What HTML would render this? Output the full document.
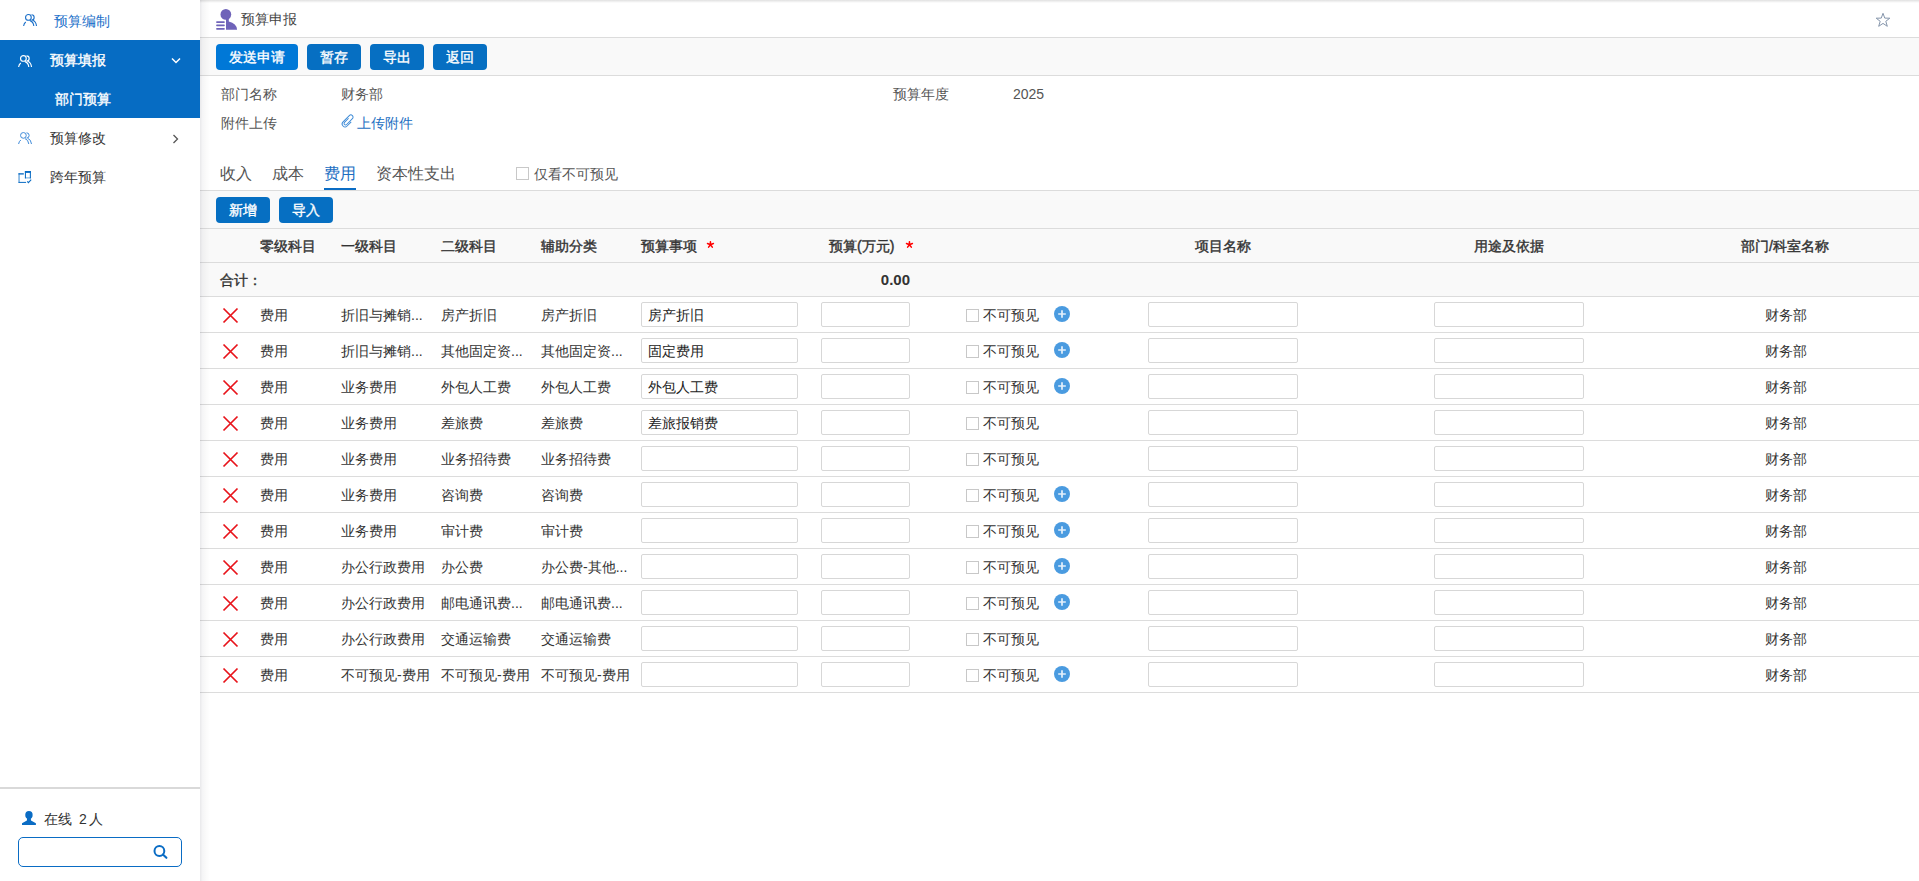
<!DOCTYPE html>
<html><head><meta charset="utf-8"><style>
html,body{margin:0;padding:0;}
body{width:1919px;height:881px;overflow:hidden;position:relative;background:#fff;font-family:"Liberation Sans", sans-serif;}
.t{position:absolute;white-space:nowrap;line-height:20px;}
.m{font-weight:500}
.btn{position:absolute;color:#fff;font-size:14px;text-align:center;border-radius:4px;-webkit-text-stroke:0.35px #fff;}
</style></head><body>
<div style="position:absolute;left:0px;top:40px;width:200px;height:78px;background:#066cc3"></div>
<svg style="position:absolute;left:23px;top:12.5px" width="15" height="15" viewBox="0 0 15 15">
<circle cx="5.4" cy="4.4" r="2.85" fill="none" stroke="#1a6fc9" stroke-width="1.1"/>
<path d="M8.5 1.8 A2.65 2.65 0 0 1 8.5 7.1" fill="none" stroke="#1a6fc9" stroke-width="1.1"/>
<path d="M0.6 13 Q1.0 10.3 2.8 9.0" fill="none" stroke="#1a6fc9" stroke-width="1.1"/>
<path d="M7.0 7.6 Q10.3 8.6 10.8 13" fill="none" stroke="#1a6fc9" stroke-width="1.1"/>
<path d="M9.7 7.3 Q13.0 8.4 13.5 13" fill="none" stroke="#1a6fc9" stroke-width="1.1"/>
</svg>
<div class="t" style="left:54px;top:10.5px;font-size:14px;color:#1a6fc9;font-weight:normal;">预算编制</div>
<svg style="position:absolute;left:18px;top:53.5px" width="15" height="15" viewBox="0 0 15 15">
<circle cx="5.4" cy="4.4" r="2.85" fill="none" stroke="#fff" stroke-width="1.15"/>
<path d="M8.5 1.8 A2.65 2.65 0 0 1 8.5 7.1" fill="none" stroke="#fff" stroke-width="1.15"/>
<path d="M0.6 13 Q1.0 10.3 2.8 9.0" fill="none" stroke="#fff" stroke-width="1.15"/>
<path d="M7.0 7.6 Q10.3 8.6 10.8 13" fill="none" stroke="#fff" stroke-width="1.15"/>
<path d="M9.7 7.3 Q13.0 8.4 13.5 13" fill="none" stroke="#fff" stroke-width="1.15"/>
</svg>
<div class="t" style="left:50px;top:49.5px;font-size:14px;color:#fff;font-weight:normal;-webkit-text-stroke:0.35px #fff;">预算填报</div>
<svg style="position:absolute;left:171px;top:57px" width="10" height="8" viewBox="0 0 10 8"><path d="M1 1.5 L5 5.5 L9 1.5" fill="none" stroke="#fff" stroke-width="1.5"/></svg>
<div class="t" style="left:55px;top:88.5px;font-size:14px;color:#fff;font-weight:normal;-webkit-text-stroke:0.35px #fff;">部门预算</div>
<svg style="position:absolute;left:18px;top:131px" width="15" height="15" viewBox="0 0 15 15">
<circle cx="5.4" cy="4.4" r="2.85" fill="none" stroke="#3f8bd9" stroke-width="1.0"/>
<path d="M8.5 1.8 A2.65 2.65 0 0 1 8.5 7.1" fill="none" stroke="#3f8bd9" stroke-width="1.0"/>
<path d="M0.6 13 Q1.0 10.3 2.8 9.0" fill="none" stroke="#3f8bd9" stroke-width="1.0"/>
<path d="M7.0 7.6 Q10.3 8.6 10.8 13" fill="none" stroke="#3f8bd9" stroke-width="1.0"/>
<path d="M9.7 7.3 Q13.0 8.4 13.5 13" fill="none" stroke="#3f8bd9" stroke-width="1.0"/>
</svg>
<div class="t" style="left:50px;top:127.5px;font-size:14px;color:#333;font-weight:normal;">预算修改</div>
<svg style="position:absolute;left:172px;top:134px" width="8" height="10" viewBox="0 0 8 10"><path d="M1.5 1 L5.5 5 L1.5 9" fill="none" stroke="#555" stroke-width="1.3"/></svg>
<svg style="position:absolute;left:14px;top:165px" width="22" height="24" viewBox="0 0 22 24" fill="#0a6cc4">
<rect x="4.5" y="8.2" width="5.3" height="1.35"/>
<rect x="4.5" y="8.2" width="1.1" height="9.6" opacity="0.75"/>
<rect x="4.5" y="16.9" width="7.6" height="1.0"/>
<rect x="10.9" y="6" width="6" height="1.9"/>
<rect x="10.9" y="6" width="1.05" height="7.4"/>
<rect x="15.85" y="6" width="1.05" height="7.4"/>
<rect x="10.9" y="12.4" width="6" height="1.0" opacity="0.6"/>
<path d="M13.3 16.3 L14.4 17.6 L17.2 14.7" fill="none" stroke="#0a6cc4" stroke-width="1.1"/>
</svg>
<div class="t" style="left:50px;top:167.0px;font-size:14px;color:#333;font-weight:normal;">跨年预算</div>
<div style="position:absolute;left:0px;top:787px;width:200px;height:2px;background:#d9d9d9"></div>
<svg style="position:absolute;left:16px;top:806px" width="26" height="24" viewBox="0 0 26 24">
<ellipse cx="12.95" cy="9.0" rx="3.7" ry="4.1" fill="#0a6cc4"/>
<path d="M11.1 12 L14.8 12 L15.0 14.4 L19.9 17.3 L19.9 19.1 L6.0 19.1 L6.0 17.3 L10.9 14.4 Z" fill="#0a6cc4"/>
</svg>
<div class="t" style="left:44px;top:809.0px;font-size:14px;color:#333;font-weight:normal;">在线</div>
<div class="t" style="left:79px;top:809.0px;font-size:14px;color:#333;font-weight:normal;">2</div>
<div class="t" style="left:89px;top:809.0px;font-size:14px;color:#333;font-weight:normal;">人</div>
<div style="position:absolute;left:18px;top:837px;width:164px;height:30px;box-sizing:border-box;border:1.5px solid #0a6cc4;border-radius:5px;background:#fff"></div>
<svg style="position:absolute;left:152px;top:844px" width="17" height="17" viewBox="0 0 17 17">
<circle cx="7.4" cy="7" r="4.9" fill="none" stroke="#0a6cc4" stroke-width="2"/>
<path d="M10.9 10.5 L14.4 13.8" stroke="#0a6cc4" stroke-width="2.1" stroke-linecap="round"/>
</svg>
<div style="position:absolute;left:200px;top:0px;width:1719px;height:881px;background:#fff"></div>
<div style="position:absolute;left:200px;top:38px;width:1719px;height:37px;background:#f9f9f9"></div>
<div style="position:absolute;left:200px;top:37px;width:1719px;height:1px;background:#dcdcdc"></div>
<div style="position:absolute;left:200px;top:75px;width:1719px;height:1px;background:#dcdcdc"></div>
<svg style="position:absolute;left:212px;top:4px" width="30" height="30" viewBox="0 0 30 30">
<circle cx="13.85" cy="10.4" r="5.35" fill="#6f63b9"/>
<path d="M14 13 L16.8 13 L16.8 17.6 Q24.6 19.4 25.1 25.8 L14 25.8 Z" fill="#6f63b9"/>
<rect x="4.1" y="17.2" width="8.7" height="1.75" rx="0.8" fill="#6f63b9"/>
<rect x="4.1" y="20.6" width="8.7" height="1.6" rx="0.8" fill="#6f63b9"/>
<rect x="4.1" y="24.0" width="8.7" height="1.75" rx="0.8" fill="#6f63b9"/>
</svg>
<div class="t" style="left:241px;top:8.5px;font-size:14px;color:#444;font-weight:normal;">预算申报</div>
<svg style="position:absolute;left:1875px;top:12px" width="16" height="16" viewBox="0 0 16 16">
<path d="M8 1.3 L9.75 6.1 L14.8 6.2 L10.8 9.3 L12.3 14.3 L8 11.4 L3.7 14.3 L5.2 9.3 L1.2 6.2 L6.25 6.1 Z" fill="none" stroke="#8595ab" stroke-width="1"/>
</svg>
<div class="btn" style="left:216px;top:44px;width:82px;height:26px;background:#0078d7;line-height:26px">发送申请</div>
<div class="btn" style="left:307px;top:44px;width:54px;height:26px;background:#066fc2;line-height:26px">暂存</div>
<div class="btn" style="left:370px;top:44px;width:54px;height:26px;background:#066fc2;line-height:26px">导出</div>
<div class="btn" style="left:433px;top:44px;width:54px;height:26px;background:#066fc2;line-height:26px">返回</div>
<div class="t" style="left:221px;top:83.5px;font-size:14px;color:#555;font-weight:normal;">部门名称</div>
<div class="t" style="left:341px;top:83.5px;font-size:14px;color:#555;font-weight:normal;">财务部</div>
<div class="t" style="left:893px;top:83.5px;font-size:14px;color:#555;font-weight:normal;">预算年度</div>
<div class="t" style="left:1013px;top:83.5px;font-size:14px;color:#555;font-weight:normal;">2025</div>
<div class="t" style="left:221px;top:112.5px;font-size:14px;color:#555;font-weight:normal;">附件上传</div>
<svg style="position:absolute;left:336px;top:108px" width="24" height="24" viewBox="0 0 24 24">
<g transform="translate(12.1 12.9) rotate(45)">
<path d="M2.9 -1.5 L2.9 4.3 A2.9 2.9 0 0 1 -2.9 4.3 L-2.9 -4.6 A2.2 2.2 0 0 1 1.5 -4.6 L1.5 3.6 A1.5 1.5 0 0 1 -1.5 3.6 L-1.5 -2.2" fill="none" stroke="#3d8ad6" stroke-width="0.95"/>
</g></svg>
<div class="t" style="left:357px;top:112.5px;font-size:14px;color:#1d6fc2;font-weight:normal;">上传附件</div>
<div class="t" style="left:220px;top:163.5px;font-size:16px;color:#555;font-weight:normal;">收入</div>
<div class="t" style="left:272px;top:163.5px;font-size:16px;color:#555;font-weight:normal;">成本</div>
<div class="t" style="left:324px;top:163.5px;font-size:16px;color:#1d6fc2;font-weight:normal;">费用</div>
<div class="t" style="left:376px;top:163.5px;font-size:16px;color:#555;font-weight:normal;">资本性支出</div>
<div style="position:absolute;left:324px;top:188px;width:32px;height:2px;background:#0a6cc4"></div>
<div style="position:absolute;left:516px;top:167px;width:13px;height:13px;box-sizing:border-box;border:1px solid #c8c8c8;background:#fff"></div>
<div class="t" style="left:534px;top:163.5px;font-size:14px;color:#555;font-weight:normal;">仅看不可预见</div>
<div style="position:absolute;left:200px;top:190px;width:1719px;height:1px;background:#dcdcdc"></div>
<div style="position:absolute;left:200px;top:191px;width:1719px;height:37px;background:#f9f9f9"></div>
<div class="btn" style="left:216px;top:197px;width:54px;height:26px;background:#066fc2;line-height:26px">新增</div>
<div class="btn" style="left:279px;top:197px;width:54px;height:26px;background:#066fc2;line-height:26px">导入</div>
<div style="position:absolute;left:200px;top:228px;width:1719px;height:1px;background:#dcdcdc"></div>
<div style="position:absolute;left:200px;top:229px;width:1719px;height:33px;background:#f9f9f9"></div>
<div style="position:absolute;left:200px;top:262px;width:1719px;height:1px;background:#dcdcdc"></div>
<div class="t" style="left:260px;top:235.5px;font-size:14px;color:#333;font-weight:normal;-webkit-text-stroke:0.4px #333;">零级科目</div>
<div class="t" style="left:341px;top:235.5px;font-size:14px;color:#333;font-weight:normal;-webkit-text-stroke:0.4px #333;">一级科目</div>
<div class="t" style="left:441px;top:235.5px;font-size:14px;color:#333;font-weight:normal;-webkit-text-stroke:0.4px #333;">二级科目</div>
<div class="t" style="left:541px;top:235.5px;font-size:14px;color:#333;font-weight:normal;-webkit-text-stroke:0.4px #333;">辅助分类</div>
<div class="t" style="left:641px;top:235.5px;font-size:14px;color:#333;font-weight:normal;-webkit-text-stroke:0.4px #333;">预算事项</div>
<svg style="position:absolute;left:700px;top:236px" width="20" height="20" viewBox="0 0 20 20"><g stroke="#f00" stroke-width="1.55" stroke-linecap="round"><path d="M10.45 8.7 L10.45 5.7 M10.45 8.7 L13.4 7.6 M10.45 8.7 L7.5 7.6 M10.45 8.7 L12.3 11.1 M10.45 8.7 L8.6 11.1"/></g></svg>
<div class="t" style="left:829px;top:235.5px;font-size:14px;color:#333;font-weight:normal;-webkit-text-stroke:0.4px #333;">预算(万元)</div>
<svg style="position:absolute;left:899px;top:236px" width="20" height="20" viewBox="0 0 20 20"><g stroke="#f00" stroke-width="1.55" stroke-linecap="round"><path d="M10.45 8.7 L10.45 5.7 M10.45 8.7 L13.4 7.6 M10.45 8.7 L7.5 7.6 M10.45 8.7 L12.3 11.1 M10.45 8.7 L8.6 11.1"/></g></svg>
<div class="t" style="left:1195px;top:235.5px;font-size:14px;color:#333;font-weight:normal;-webkit-text-stroke:0.4px #333;">项目名称</div>
<div class="t" style="left:1474px;top:235.5px;font-size:14px;color:#333;font-weight:normal;-webkit-text-stroke:0.4px #333;">用途及依据</div>
<div class="t" style="left:1741px;top:235.5px;font-size:14px;color:#333;font-weight:normal;-webkit-text-stroke:0.4px #333;">部门/科室名称</div>
<div style="position:absolute;left:200px;top:263px;width:1719px;height:33px;background:#f9f9f9"></div>
<div style="position:absolute;left:200px;top:296px;width:1719px;height:1px;background:#dcdcdc"></div>
<div class="t" style="left:220px;top:270.0px;font-size:14px;color:#333;font-weight:normal;-webkit-text-stroke:0.4px #333;">合计：</div>
<div class="t" style="left:810px;width:100px;text-align:right;top:269.5px;font-size:15px;font-weight:bold;color:#333">0.00</div>
<div style="position:absolute;left:200px;top:332px;width:1719px;height:1px;background:#dcdcdc"></div>
<svg style="position:absolute;left:222px;top:307px" width="17" height="17" viewBox="0 0 17 17">
<path d="M1.5 1.5 L15.5 15.5 M15.5 1.5 L1.5 15.5" stroke="#e8141b" stroke-width="1.75"/></svg>
<div class="t" style="left:260px;top:305.0px;font-size:14px;color:#333;font-weight:normal;">费用</div>
<div class="t" style="left:341px;top:305.0px;font-size:14px;color:#333;font-weight:normal;">折旧与摊销...</div>
<div class="t" style="left:441px;top:305.0px;font-size:14px;color:#333;font-weight:normal;">房产折旧</div>
<div class="t" style="left:541px;top:305.0px;font-size:14px;color:#333;font-weight:normal;">房产折旧</div>
<div style="position:absolute;left:641px;top:302px;width:157px;height:25px;box-sizing:border-box;border:1px solid #d7d7d7;border-radius:2px;background:#fff"></div>
<div class="t" style="left:648px;top:305.0px;font-size:14px;color:#222;font-weight:normal;">房产折旧</div>
<div style="position:absolute;left:821px;top:302px;width:89px;height:25px;box-sizing:border-box;border:1px solid #d7d7d7;border-radius:2px;background:#fff"></div>
<div style="position:absolute;left:966px;top:309px;width:13px;height:13px;box-sizing:border-box;border:1px solid #c8c8c8;background:#fff"></div>
<div class="t" style="left:983px;top:305.0px;font-size:14px;color:#333;font-weight:normal;">不可预见</div>
<svg style="position:absolute;left:1054px;top:306px" width="16" height="16" viewBox="0 0 16 16">
<circle cx="8" cy="8" r="8" fill="#4a9be0"/><path d="M8 4.2 V11.8 M4.2 8 H11.8" stroke="#e4f0fb" stroke-width="1.7"/></svg>
<div style="position:absolute;left:1148px;top:302px;width:150px;height:25px;box-sizing:border-box;border:1px solid #d7d7d7;border-radius:2px;background:#fff"></div>
<div style="position:absolute;left:1434px;top:302px;width:150px;height:25px;box-sizing:border-box;border:1px solid #d7d7d7;border-radius:2px;background:#fff"></div>
<div class="t" style="left:1765px;top:305.0px;font-size:14px;color:#333;font-weight:normal;">财务部</div>
<div style="position:absolute;left:200px;top:368px;width:1719px;height:1px;background:#dcdcdc"></div>
<svg style="position:absolute;left:222px;top:343px" width="17" height="17" viewBox="0 0 17 17">
<path d="M1.5 1.5 L15.5 15.5 M15.5 1.5 L1.5 15.5" stroke="#e8141b" stroke-width="1.75"/></svg>
<div class="t" style="left:260px;top:341.0px;font-size:14px;color:#333;font-weight:normal;">费用</div>
<div class="t" style="left:341px;top:341.0px;font-size:14px;color:#333;font-weight:normal;">折旧与摊销...</div>
<div class="t" style="left:441px;top:341.0px;font-size:14px;color:#333;font-weight:normal;">其他固定资...</div>
<div class="t" style="left:541px;top:341.0px;font-size:14px;color:#333;font-weight:normal;">其他固定资...</div>
<div style="position:absolute;left:641px;top:338px;width:157px;height:25px;box-sizing:border-box;border:1px solid #d7d7d7;border-radius:2px;background:#fff"></div>
<div class="t" style="left:648px;top:341.0px;font-size:14px;color:#222;font-weight:normal;">固定费用</div>
<div style="position:absolute;left:821px;top:338px;width:89px;height:25px;box-sizing:border-box;border:1px solid #d7d7d7;border-radius:2px;background:#fff"></div>
<div style="position:absolute;left:966px;top:345px;width:13px;height:13px;box-sizing:border-box;border:1px solid #c8c8c8;background:#fff"></div>
<div class="t" style="left:983px;top:341.0px;font-size:14px;color:#333;font-weight:normal;">不可预见</div>
<svg style="position:absolute;left:1054px;top:342px" width="16" height="16" viewBox="0 0 16 16">
<circle cx="8" cy="8" r="8" fill="#4a9be0"/><path d="M8 4.2 V11.8 M4.2 8 H11.8" stroke="#e4f0fb" stroke-width="1.7"/></svg>
<div style="position:absolute;left:1148px;top:338px;width:150px;height:25px;box-sizing:border-box;border:1px solid #d7d7d7;border-radius:2px;background:#fff"></div>
<div style="position:absolute;left:1434px;top:338px;width:150px;height:25px;box-sizing:border-box;border:1px solid #d7d7d7;border-radius:2px;background:#fff"></div>
<div class="t" style="left:1765px;top:341.0px;font-size:14px;color:#333;font-weight:normal;">财务部</div>
<div style="position:absolute;left:200px;top:404px;width:1719px;height:1px;background:#dcdcdc"></div>
<svg style="position:absolute;left:222px;top:379px" width="17" height="17" viewBox="0 0 17 17">
<path d="M1.5 1.5 L15.5 15.5 M15.5 1.5 L1.5 15.5" stroke="#e8141b" stroke-width="1.75"/></svg>
<div class="t" style="left:260px;top:377.0px;font-size:14px;color:#333;font-weight:normal;">费用</div>
<div class="t" style="left:341px;top:377.0px;font-size:14px;color:#333;font-weight:normal;">业务费用</div>
<div class="t" style="left:441px;top:377.0px;font-size:14px;color:#333;font-weight:normal;">外包人工费</div>
<div class="t" style="left:541px;top:377.0px;font-size:14px;color:#333;font-weight:normal;">外包人工费</div>
<div style="position:absolute;left:641px;top:374px;width:157px;height:25px;box-sizing:border-box;border:1px solid #d7d7d7;border-radius:2px;background:#fff"></div>
<div class="t" style="left:648px;top:377.0px;font-size:14px;color:#222;font-weight:normal;">外包人工费</div>
<div style="position:absolute;left:821px;top:374px;width:89px;height:25px;box-sizing:border-box;border:1px solid #d7d7d7;border-radius:2px;background:#fff"></div>
<div style="position:absolute;left:966px;top:381px;width:13px;height:13px;box-sizing:border-box;border:1px solid #c8c8c8;background:#fff"></div>
<div class="t" style="left:983px;top:377.0px;font-size:14px;color:#333;font-weight:normal;">不可预见</div>
<svg style="position:absolute;left:1054px;top:378px" width="16" height="16" viewBox="0 0 16 16">
<circle cx="8" cy="8" r="8" fill="#4a9be0"/><path d="M8 4.2 V11.8 M4.2 8 H11.8" stroke="#e4f0fb" stroke-width="1.7"/></svg>
<div style="position:absolute;left:1148px;top:374px;width:150px;height:25px;box-sizing:border-box;border:1px solid #d7d7d7;border-radius:2px;background:#fff"></div>
<div style="position:absolute;left:1434px;top:374px;width:150px;height:25px;box-sizing:border-box;border:1px solid #d7d7d7;border-radius:2px;background:#fff"></div>
<div class="t" style="left:1765px;top:377.0px;font-size:14px;color:#333;font-weight:normal;">财务部</div>
<div style="position:absolute;left:200px;top:440px;width:1719px;height:1px;background:#dcdcdc"></div>
<svg style="position:absolute;left:222px;top:415px" width="17" height="17" viewBox="0 0 17 17">
<path d="M1.5 1.5 L15.5 15.5 M15.5 1.5 L1.5 15.5" stroke="#e8141b" stroke-width="1.75"/></svg>
<div class="t" style="left:260px;top:413.0px;font-size:14px;color:#333;font-weight:normal;">费用</div>
<div class="t" style="left:341px;top:413.0px;font-size:14px;color:#333;font-weight:normal;">业务费用</div>
<div class="t" style="left:441px;top:413.0px;font-size:14px;color:#333;font-weight:normal;">差旅费</div>
<div class="t" style="left:541px;top:413.0px;font-size:14px;color:#333;font-weight:normal;">差旅费</div>
<div style="position:absolute;left:641px;top:410px;width:157px;height:25px;box-sizing:border-box;border:1px solid #d7d7d7;border-radius:2px;background:#fff"></div>
<div class="t" style="left:648px;top:413.0px;font-size:14px;color:#222;font-weight:normal;">差旅报销费</div>
<div style="position:absolute;left:821px;top:410px;width:89px;height:25px;box-sizing:border-box;border:1px solid #d7d7d7;border-radius:2px;background:#fff"></div>
<div style="position:absolute;left:966px;top:417px;width:13px;height:13px;box-sizing:border-box;border:1px solid #c8c8c8;background:#fff"></div>
<div class="t" style="left:983px;top:413.0px;font-size:14px;color:#333;font-weight:normal;">不可预见</div>
<div style="position:absolute;left:1148px;top:410px;width:150px;height:25px;box-sizing:border-box;border:1px solid #d7d7d7;border-radius:2px;background:#fff"></div>
<div style="position:absolute;left:1434px;top:410px;width:150px;height:25px;box-sizing:border-box;border:1px solid #d7d7d7;border-radius:2px;background:#fff"></div>
<div class="t" style="left:1765px;top:413.0px;font-size:14px;color:#333;font-weight:normal;">财务部</div>
<div style="position:absolute;left:200px;top:476px;width:1719px;height:1px;background:#dcdcdc"></div>
<svg style="position:absolute;left:222px;top:451px" width="17" height="17" viewBox="0 0 17 17">
<path d="M1.5 1.5 L15.5 15.5 M15.5 1.5 L1.5 15.5" stroke="#e8141b" stroke-width="1.75"/></svg>
<div class="t" style="left:260px;top:449.0px;font-size:14px;color:#333;font-weight:normal;">费用</div>
<div class="t" style="left:341px;top:449.0px;font-size:14px;color:#333;font-weight:normal;">业务费用</div>
<div class="t" style="left:441px;top:449.0px;font-size:14px;color:#333;font-weight:normal;">业务招待费</div>
<div class="t" style="left:541px;top:449.0px;font-size:14px;color:#333;font-weight:normal;">业务招待费</div>
<div style="position:absolute;left:641px;top:446px;width:157px;height:25px;box-sizing:border-box;border:1px solid #d7d7d7;border-radius:2px;background:#fff"></div>
<div style="position:absolute;left:821px;top:446px;width:89px;height:25px;box-sizing:border-box;border:1px solid #d7d7d7;border-radius:2px;background:#fff"></div>
<div style="position:absolute;left:966px;top:453px;width:13px;height:13px;box-sizing:border-box;border:1px solid #c8c8c8;background:#fff"></div>
<div class="t" style="left:983px;top:449.0px;font-size:14px;color:#333;font-weight:normal;">不可预见</div>
<div style="position:absolute;left:1148px;top:446px;width:150px;height:25px;box-sizing:border-box;border:1px solid #d7d7d7;border-radius:2px;background:#fff"></div>
<div style="position:absolute;left:1434px;top:446px;width:150px;height:25px;box-sizing:border-box;border:1px solid #d7d7d7;border-radius:2px;background:#fff"></div>
<div class="t" style="left:1765px;top:449.0px;font-size:14px;color:#333;font-weight:normal;">财务部</div>
<div style="position:absolute;left:200px;top:512px;width:1719px;height:1px;background:#dcdcdc"></div>
<svg style="position:absolute;left:222px;top:487px" width="17" height="17" viewBox="0 0 17 17">
<path d="M1.5 1.5 L15.5 15.5 M15.5 1.5 L1.5 15.5" stroke="#e8141b" stroke-width="1.75"/></svg>
<div class="t" style="left:260px;top:485.0px;font-size:14px;color:#333;font-weight:normal;">费用</div>
<div class="t" style="left:341px;top:485.0px;font-size:14px;color:#333;font-weight:normal;">业务费用</div>
<div class="t" style="left:441px;top:485.0px;font-size:14px;color:#333;font-weight:normal;">咨询费</div>
<div class="t" style="left:541px;top:485.0px;font-size:14px;color:#333;font-weight:normal;">咨询费</div>
<div style="position:absolute;left:641px;top:482px;width:157px;height:25px;box-sizing:border-box;border:1px solid #d7d7d7;border-radius:2px;background:#fff"></div>
<div style="position:absolute;left:821px;top:482px;width:89px;height:25px;box-sizing:border-box;border:1px solid #d7d7d7;border-radius:2px;background:#fff"></div>
<div style="position:absolute;left:966px;top:489px;width:13px;height:13px;box-sizing:border-box;border:1px solid #c8c8c8;background:#fff"></div>
<div class="t" style="left:983px;top:485.0px;font-size:14px;color:#333;font-weight:normal;">不可预见</div>
<svg style="position:absolute;left:1054px;top:486px" width="16" height="16" viewBox="0 0 16 16">
<circle cx="8" cy="8" r="8" fill="#4a9be0"/><path d="M8 4.2 V11.8 M4.2 8 H11.8" stroke="#e4f0fb" stroke-width="1.7"/></svg>
<div style="position:absolute;left:1148px;top:482px;width:150px;height:25px;box-sizing:border-box;border:1px solid #d7d7d7;border-radius:2px;background:#fff"></div>
<div style="position:absolute;left:1434px;top:482px;width:150px;height:25px;box-sizing:border-box;border:1px solid #d7d7d7;border-radius:2px;background:#fff"></div>
<div class="t" style="left:1765px;top:485.0px;font-size:14px;color:#333;font-weight:normal;">财务部</div>
<div style="position:absolute;left:200px;top:548px;width:1719px;height:1px;background:#dcdcdc"></div>
<svg style="position:absolute;left:222px;top:523px" width="17" height="17" viewBox="0 0 17 17">
<path d="M1.5 1.5 L15.5 15.5 M15.5 1.5 L1.5 15.5" stroke="#e8141b" stroke-width="1.75"/></svg>
<div class="t" style="left:260px;top:521.0px;font-size:14px;color:#333;font-weight:normal;">费用</div>
<div class="t" style="left:341px;top:521.0px;font-size:14px;color:#333;font-weight:normal;">业务费用</div>
<div class="t" style="left:441px;top:521.0px;font-size:14px;color:#333;font-weight:normal;">审计费</div>
<div class="t" style="left:541px;top:521.0px;font-size:14px;color:#333;font-weight:normal;">审计费</div>
<div style="position:absolute;left:641px;top:518px;width:157px;height:25px;box-sizing:border-box;border:1px solid #d7d7d7;border-radius:2px;background:#fff"></div>
<div style="position:absolute;left:821px;top:518px;width:89px;height:25px;box-sizing:border-box;border:1px solid #d7d7d7;border-radius:2px;background:#fff"></div>
<div style="position:absolute;left:966px;top:525px;width:13px;height:13px;box-sizing:border-box;border:1px solid #c8c8c8;background:#fff"></div>
<div class="t" style="left:983px;top:521.0px;font-size:14px;color:#333;font-weight:normal;">不可预见</div>
<svg style="position:absolute;left:1054px;top:522px" width="16" height="16" viewBox="0 0 16 16">
<circle cx="8" cy="8" r="8" fill="#4a9be0"/><path d="M8 4.2 V11.8 M4.2 8 H11.8" stroke="#e4f0fb" stroke-width="1.7"/></svg>
<div style="position:absolute;left:1148px;top:518px;width:150px;height:25px;box-sizing:border-box;border:1px solid #d7d7d7;border-radius:2px;background:#fff"></div>
<div style="position:absolute;left:1434px;top:518px;width:150px;height:25px;box-sizing:border-box;border:1px solid #d7d7d7;border-radius:2px;background:#fff"></div>
<div class="t" style="left:1765px;top:521.0px;font-size:14px;color:#333;font-weight:normal;">财务部</div>
<div style="position:absolute;left:200px;top:584px;width:1719px;height:1px;background:#dcdcdc"></div>
<svg style="position:absolute;left:222px;top:559px" width="17" height="17" viewBox="0 0 17 17">
<path d="M1.5 1.5 L15.5 15.5 M15.5 1.5 L1.5 15.5" stroke="#e8141b" stroke-width="1.75"/></svg>
<div class="t" style="left:260px;top:557.0px;font-size:14px;color:#333;font-weight:normal;">费用</div>
<div class="t" style="left:341px;top:557.0px;font-size:14px;color:#333;font-weight:normal;">办公行政费用</div>
<div class="t" style="left:441px;top:557.0px;font-size:14px;color:#333;font-weight:normal;">办公费</div>
<div class="t" style="left:541px;top:557.0px;font-size:14px;color:#333;font-weight:normal;">办公费-其他...</div>
<div style="position:absolute;left:641px;top:554px;width:157px;height:25px;box-sizing:border-box;border:1px solid #d7d7d7;border-radius:2px;background:#fff"></div>
<div style="position:absolute;left:821px;top:554px;width:89px;height:25px;box-sizing:border-box;border:1px solid #d7d7d7;border-radius:2px;background:#fff"></div>
<div style="position:absolute;left:966px;top:561px;width:13px;height:13px;box-sizing:border-box;border:1px solid #c8c8c8;background:#fff"></div>
<div class="t" style="left:983px;top:557.0px;font-size:14px;color:#333;font-weight:normal;">不可预见</div>
<svg style="position:absolute;left:1054px;top:558px" width="16" height="16" viewBox="0 0 16 16">
<circle cx="8" cy="8" r="8" fill="#4a9be0"/><path d="M8 4.2 V11.8 M4.2 8 H11.8" stroke="#e4f0fb" stroke-width="1.7"/></svg>
<div style="position:absolute;left:1148px;top:554px;width:150px;height:25px;box-sizing:border-box;border:1px solid #d7d7d7;border-radius:2px;background:#fff"></div>
<div style="position:absolute;left:1434px;top:554px;width:150px;height:25px;box-sizing:border-box;border:1px solid #d7d7d7;border-radius:2px;background:#fff"></div>
<div class="t" style="left:1765px;top:557.0px;font-size:14px;color:#333;font-weight:normal;">财务部</div>
<div style="position:absolute;left:200px;top:620px;width:1719px;height:1px;background:#dcdcdc"></div>
<svg style="position:absolute;left:222px;top:595px" width="17" height="17" viewBox="0 0 17 17">
<path d="M1.5 1.5 L15.5 15.5 M15.5 1.5 L1.5 15.5" stroke="#e8141b" stroke-width="1.75"/></svg>
<div class="t" style="left:260px;top:593.0px;font-size:14px;color:#333;font-weight:normal;">费用</div>
<div class="t" style="left:341px;top:593.0px;font-size:14px;color:#333;font-weight:normal;">办公行政费用</div>
<div class="t" style="left:441px;top:593.0px;font-size:14px;color:#333;font-weight:normal;">邮电通讯费...</div>
<div class="t" style="left:541px;top:593.0px;font-size:14px;color:#333;font-weight:normal;">邮电通讯费...</div>
<div style="position:absolute;left:641px;top:590px;width:157px;height:25px;box-sizing:border-box;border:1px solid #d7d7d7;border-radius:2px;background:#fff"></div>
<div style="position:absolute;left:821px;top:590px;width:89px;height:25px;box-sizing:border-box;border:1px solid #d7d7d7;border-radius:2px;background:#fff"></div>
<div style="position:absolute;left:966px;top:597px;width:13px;height:13px;box-sizing:border-box;border:1px solid #c8c8c8;background:#fff"></div>
<div class="t" style="left:983px;top:593.0px;font-size:14px;color:#333;font-weight:normal;">不可预见</div>
<svg style="position:absolute;left:1054px;top:594px" width="16" height="16" viewBox="0 0 16 16">
<circle cx="8" cy="8" r="8" fill="#4a9be0"/><path d="M8 4.2 V11.8 M4.2 8 H11.8" stroke="#e4f0fb" stroke-width="1.7"/></svg>
<div style="position:absolute;left:1148px;top:590px;width:150px;height:25px;box-sizing:border-box;border:1px solid #d7d7d7;border-radius:2px;background:#fff"></div>
<div style="position:absolute;left:1434px;top:590px;width:150px;height:25px;box-sizing:border-box;border:1px solid #d7d7d7;border-radius:2px;background:#fff"></div>
<div class="t" style="left:1765px;top:593.0px;font-size:14px;color:#333;font-weight:normal;">财务部</div>
<div style="position:absolute;left:200px;top:656px;width:1719px;height:1px;background:#dcdcdc"></div>
<svg style="position:absolute;left:222px;top:631px" width="17" height="17" viewBox="0 0 17 17">
<path d="M1.5 1.5 L15.5 15.5 M15.5 1.5 L1.5 15.5" stroke="#e8141b" stroke-width="1.75"/></svg>
<div class="t" style="left:260px;top:629.0px;font-size:14px;color:#333;font-weight:normal;">费用</div>
<div class="t" style="left:341px;top:629.0px;font-size:14px;color:#333;font-weight:normal;">办公行政费用</div>
<div class="t" style="left:441px;top:629.0px;font-size:14px;color:#333;font-weight:normal;">交通运输费</div>
<div class="t" style="left:541px;top:629.0px;font-size:14px;color:#333;font-weight:normal;">交通运输费</div>
<div style="position:absolute;left:641px;top:626px;width:157px;height:25px;box-sizing:border-box;border:1px solid #d7d7d7;border-radius:2px;background:#fff"></div>
<div style="position:absolute;left:821px;top:626px;width:89px;height:25px;box-sizing:border-box;border:1px solid #d7d7d7;border-radius:2px;background:#fff"></div>
<div style="position:absolute;left:966px;top:633px;width:13px;height:13px;box-sizing:border-box;border:1px solid #c8c8c8;background:#fff"></div>
<div class="t" style="left:983px;top:629.0px;font-size:14px;color:#333;font-weight:normal;">不可预见</div>
<div style="position:absolute;left:1148px;top:626px;width:150px;height:25px;box-sizing:border-box;border:1px solid #d7d7d7;border-radius:2px;background:#fff"></div>
<div style="position:absolute;left:1434px;top:626px;width:150px;height:25px;box-sizing:border-box;border:1px solid #d7d7d7;border-radius:2px;background:#fff"></div>
<div class="t" style="left:1765px;top:629.0px;font-size:14px;color:#333;font-weight:normal;">财务部</div>
<div style="position:absolute;left:200px;top:692px;width:1719px;height:1px;background:#dcdcdc"></div>
<svg style="position:absolute;left:222px;top:667px" width="17" height="17" viewBox="0 0 17 17">
<path d="M1.5 1.5 L15.5 15.5 M15.5 1.5 L1.5 15.5" stroke="#e8141b" stroke-width="1.75"/></svg>
<div class="t" style="left:260px;top:665.0px;font-size:14px;color:#333;font-weight:normal;">费用</div>
<div class="t" style="left:341px;top:665.0px;font-size:14px;color:#333;font-weight:normal;">不可预见-费用</div>
<div class="t" style="left:441px;top:665.0px;font-size:14px;color:#333;font-weight:normal;">不可预见-费用</div>
<div class="t" style="left:541px;top:665.0px;font-size:14px;color:#333;font-weight:normal;">不可预见-费用</div>
<div style="position:absolute;left:641px;top:662px;width:157px;height:25px;box-sizing:border-box;border:1px solid #d7d7d7;border-radius:2px;background:#fff"></div>
<div style="position:absolute;left:821px;top:662px;width:89px;height:25px;box-sizing:border-box;border:1px solid #d7d7d7;border-radius:2px;background:#fff"></div>
<div style="position:absolute;left:966px;top:669px;width:13px;height:13px;box-sizing:border-box;border:1px solid #c8c8c8;background:#fff"></div>
<div class="t" style="left:983px;top:665.0px;font-size:14px;color:#333;font-weight:normal;">不可预见</div>
<svg style="position:absolute;left:1054px;top:666px" width="16" height="16" viewBox="0 0 16 16">
<circle cx="8" cy="8" r="8" fill="#4a9be0"/><path d="M8 4.2 V11.8 M4.2 8 H11.8" stroke="#e4f0fb" stroke-width="1.7"/></svg>
<div style="position:absolute;left:1148px;top:662px;width:150px;height:25px;box-sizing:border-box;border:1px solid #d7d7d7;border-radius:2px;background:#fff"></div>
<div style="position:absolute;left:1434px;top:662px;width:150px;height:25px;box-sizing:border-box;border:1px solid #d7d7d7;border-radius:2px;background:#fff"></div>
<div class="t" style="left:1765px;top:665.0px;font-size:14px;color:#333;font-weight:normal;">财务部</div>
<div style="position:absolute;left:200px;top:0px;width:10px;height:881px;background:linear-gradient(to right, rgba(0,0,30,0.09), rgba(0,0,30,0.04) 25%, rgba(0,0,0,0.02) 60%, rgba(0,0,0,0) 100%)"></div>
<div style="position:absolute;left:200px;top:0px;width:1719px;height:3px;background:linear-gradient(to bottom, rgba(0,0,0,0.12), rgba(0,0,0,0))"></div>
</body></html>
